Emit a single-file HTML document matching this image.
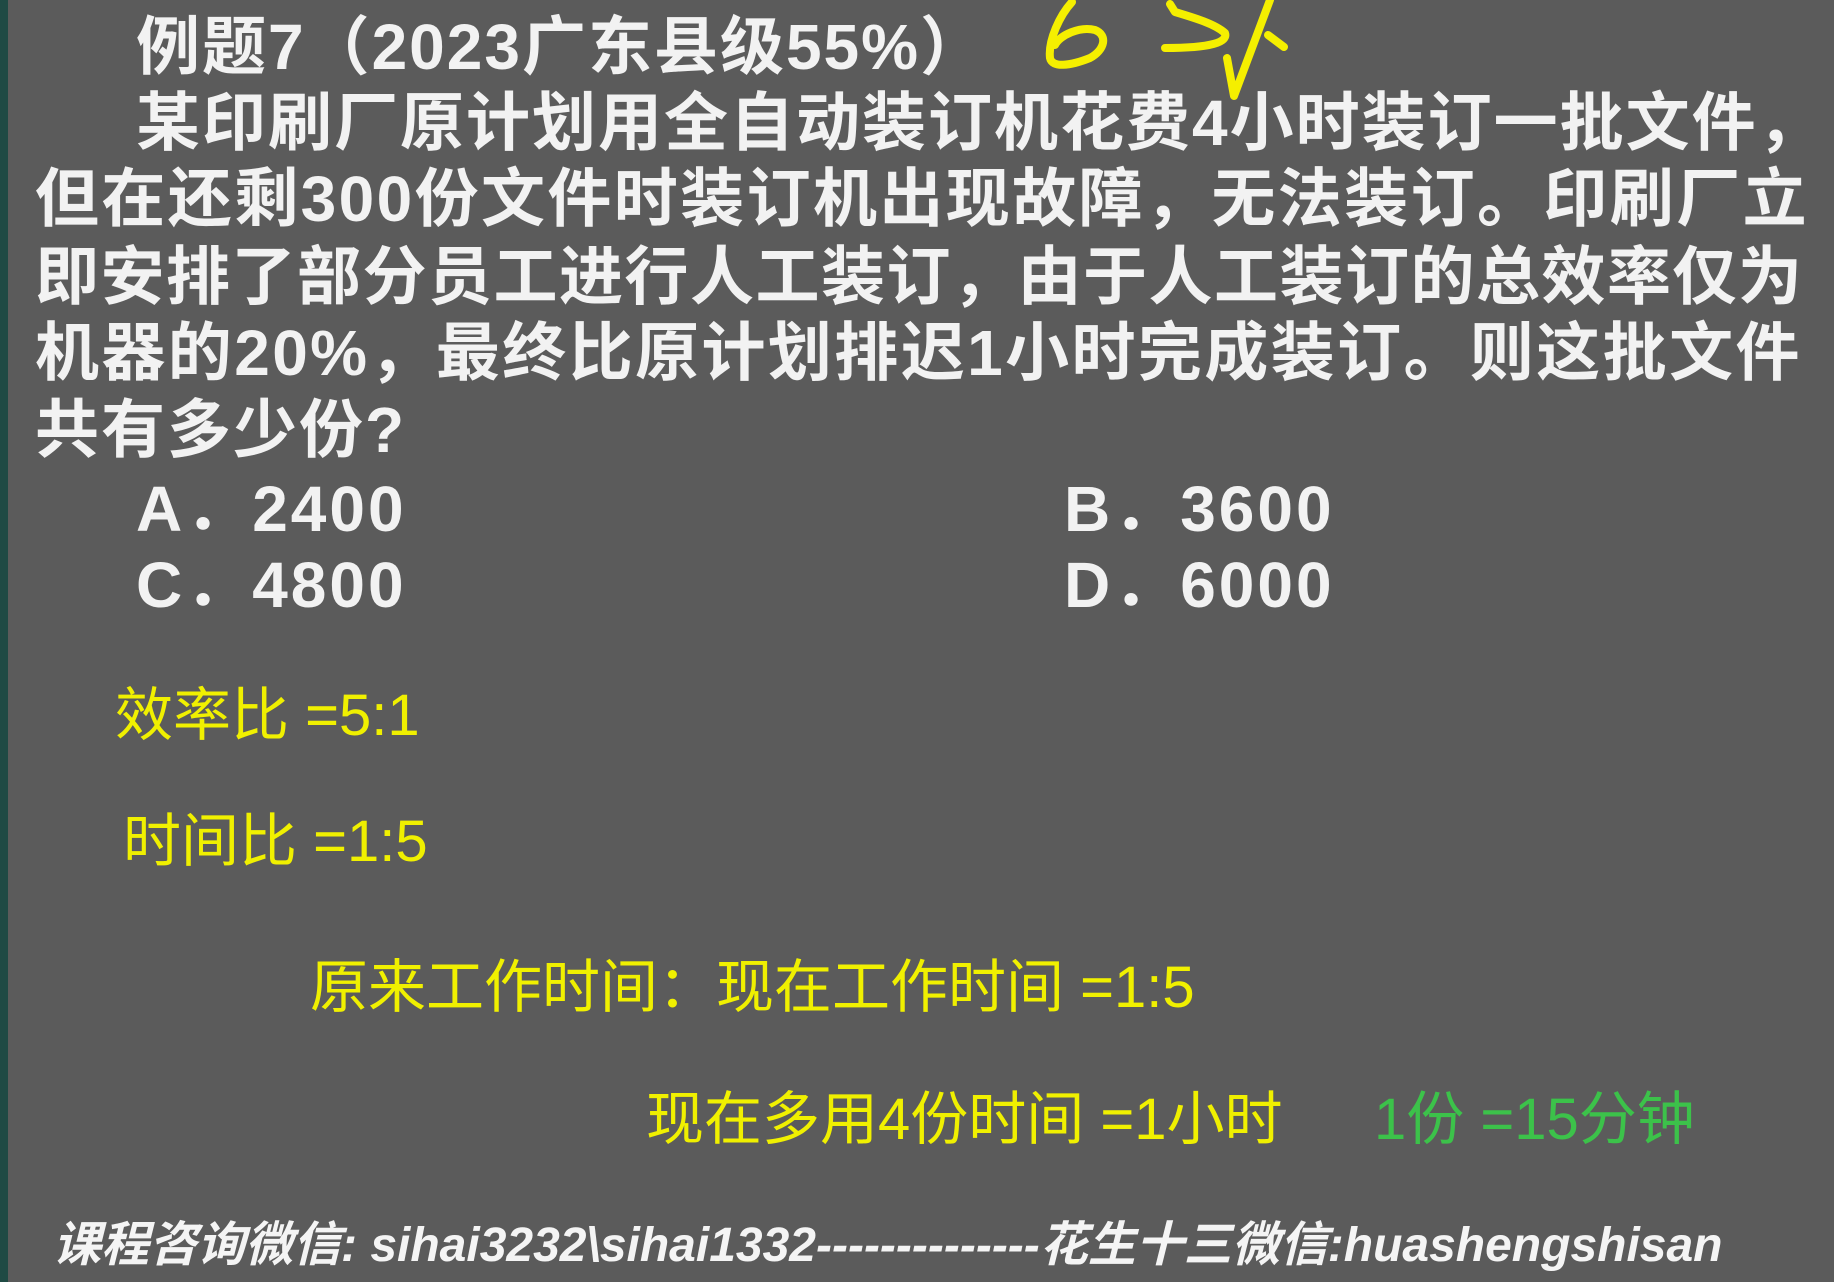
<!DOCTYPE html>
<html><head><meta charset="utf-8"><style>
body{margin:0;width:1834px;height:1282px;background:#5b5b5b;position:relative;overflow:hidden;font-family:"Liberation Sans","Noto Sans CJK SC",sans-serif}
.bar{position:absolute;left:0;top:0;width:8px;height:1282px;background:#1f4a44}
.t{position:absolute;white-space:nowrap;color:#f2f2f2;font-weight:bold;font-size:64px;line-height:1;letter-spacing:2px}
.o{letter-spacing:3px}
.y{position:absolute;white-space:nowrap;color:#f0f000;font-size:58px;line-height:1}
.g{color:#3cc24a}
.f{position:absolute;left:53px;top:1222px;white-space:nowrap;color:#f4f4f4;font-weight:bold;font-style:italic;font-size:48px;line-height:1}
</style></head><body>
<div class="bar"></div>
<div class="t" style="left:136px;top:15px">例题7（2023广东县级55%）</div>
<div class="t" style="left:136px;top:91px">某印刷厂原计划用全自动装订机花费4小时装订一批文件，</div>
<div class="t" style="left:35px;top:167px;letter-spacing:2.4px">但在还剩300份文件时装订机出现故障，无法装订。印刷厂立</div>
<div class="t" style="left:35px;top:245px;letter-spacing:1.5px">即安排了部分员工进行人工装订，由于人工装订的总效率仅为</div>
<div class="t" style="left:35px;top:321px;letter-spacing:2.4px">机器的20%，最终比原计划排迟1小时完成装订。则这批文件</div>
<div class="t" style="left:35px;top:398px">共有多少份?</div>
<div class="t o" style="left:136px;top:477px">A．2400</div>
<div class="t o" style="left:1064px;top:477px">B．3600</div>
<div class="t o" style="left:136px;top:553px">C．4800</div>
<div class="t o" style="left:1064px;top:553px">D．6000</div>
<div class="y" style="left:115px;top:687px">效率比 =5:1</div>
<div class="y" style="left:123px;top:813px">时间比 =1:5</div>
<div class="y" style="left:310px;top:959px">原来工作时间：现在工作时间 =1:5</div>
<div class="y" style="left:646px;top:1091px">现在多用4份时间 =1小时</div>
<div class="y g" style="left:1374px;top:1091px">1份 =15分钟</div>
<div class="f">课程咨询微信: sihai3232\sihai1332--------------花生十三微信:huashengshisan</div>
<svg style="position:absolute;left:0;top:0" width="1834" height="120" fill="none" stroke="#f5ef00" stroke-width="8" stroke-linecap="round" stroke-linejoin="round">
<path d="M1072 2 C1060 15 1048 40 1050 58 C1052 68 1070 66 1090 58 C1105 50 1108 35 1095 30 C1080 26 1060 35 1055 45"/>
<path d="M1170 4 L1175 12 C1195 18 1215 24 1225 33 C1228 42 1212 48 1165 48"/>
<path d="M1227 58 L1234 96 L1270 0"/>
<path d="M1268 35 L1284 47"/>
</svg>
</body></html>
